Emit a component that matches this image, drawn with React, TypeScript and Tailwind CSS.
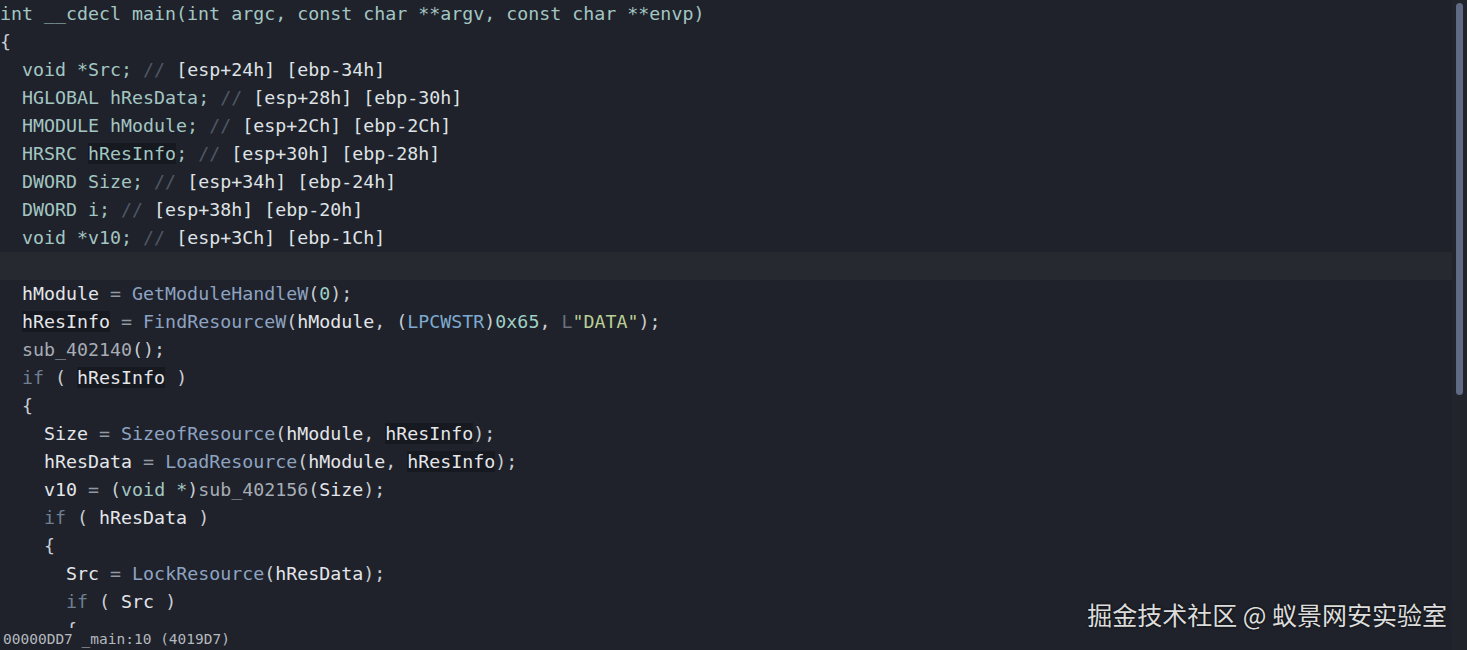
import React from 'react';

type Tok = [string, string];

const T = 'text-[#a3c6c3]'; // types / declarations
const W = 'text-[#e4e6ea]'; // locals, plain
const P = 'text-[#c9cdd3]'; // punctuation
const OP = 'text-[#9199a4]'; // operators
const FN = 'text-[#8ea3c2]'; // api calls
const NUM = 'text-[#9fd0c6]';
const KW = 'text-[#6f7f92]'; // if
const CM = 'text-[#4f5866]'; // comment marker
const CT = 'text-[#dfe2e6]'; // comment text
const SUB = 'text-[#a7adb6]';
const STR = 'text-[#b9cf95]';
const HL = 'bg-[#161920]'; // highlighted identifier

const id = (s: string, c = W): Tok => [s, c];
const hr = (c = W): Tok => ['hResInfo', c + ' ' + HL];

const decl = (ind: number, head: Tok[], tail: string, cmt: string): Tok[] => [
  [' '.repeat(ind), P],
  ...head,
  [tail, T],
  [' // ', CM],
  [cmt, CT],
];

const lines: Tok[][] = [
  [['int __cdecl main(int argc, const char **argv, const char **envp)', T]],
  [['{', P]],
  decl(2, [['void *Src', T]], ';', '[esp+24h] [ebp-34h]'),
  decl(2, [['HGLOBAL hResData', T]], ';', '[esp+28h] [ebp-30h]'),
  decl(2, [['HMODULE hModule', T]], ';', '[esp+2Ch] [ebp-2Ch]'),
  decl(2, [['HRSRC ', T], hr(T)], ';', '[esp+30h] [ebp-28h]'),
  decl(2, [['DWORD Size', T]], ';', '[esp+34h] [ebp-24h]'),
  decl(2, [['DWORD i', T]], ';', '[esp+38h] [ebp-20h]'),
  decl(2, [['void *v10', T]], ';', '[esp+3Ch] [ebp-1Ch]'),
  [],
  [['  ', P], id('hModule'), [' = ', OP], ['GetModuleHandleW', FN], ['(', P], ['0', NUM], [');', P]],
  [
    ['  ', P], hr(), [' = ', OP], ['FindResourceW', FN], ['(', P], id('hModule'), [', (', P],
    ['LPCWSTR', 'text-[#7eaad0]'], [')', P], ['0x65', NUM], [', ', P], ['L', 'text-[#69717d]'],
    ['"DATA"', STR], [');', P],
  ],
  [['  ', P], ['sub_402140', SUB], ['();', P]],
  [['  ', P], ['if', KW], [' ( ', P], hr(), [' )', P]],
  [['  {', P]],
  [['    ', P], id('Size'), [' = ', OP], ['SizeofResource', FN], ['(', P], id('hModule'), [', ', P], hr(), [');', P]],
  [['    ', P], id('hResData'), [' = ', OP], ['LoadResource', FN], ['(', P], id('hModule'), [', ', P], hr(), [');', P]],
  [['    ', P], id('v10'), [' = ', OP], ['(', P], ['void *', T], [')', P], ['sub_402156', SUB], ['(', P], id('Size'), [');', P]],
  [['    ', P], ['if', KW], [' ( ', P], id('hResData'), [' )', P]],
  [['    {', P]],
  [['      ', P], id('Src'), [' = ', OP], ['LockResource', FN], ['(', P], id('hResData'), [');', P]],
  [['      ', P], ['if', KW], [' ( ', P], id('Src'), [' )', P]],
  [['      {', P]],
];

export default function App() {
  return (
    <div className="relative flex h-[650px] w-full overflow-hidden bg-[#1f222a]">
      <div className="flex min-w-0 flex-1 flex-col">
        {/* pseudocode */}
        <div className="flex-1 overflow-hidden font-['DejaVu_Sans_Mono',monospace] text-[18.3px] leading-[28px]">
          {lines.map((ln, i) => (
            <div key={i} className={'h-[28px] whitespace-pre ' + (i === 9 ? 'bg-[#262930]' : '')}>
              {ln.map((t, j) => (
                <span key={j} className={t[1]}>
                  {t[0]}
                </span>
              ))}
            </div>
          ))}
        </div>
        {/* status line */}
        <div className="h-[22px] shrink-0 whitespace-pre pl-[3px] font-['DejaVu_Sans_Mono',monospace] text-[14.5px] leading-[22px] text-[#b4b8bf]">
          00000DD7 _main:10 (4019D7)
        </div>
      </div>

      {/* scrollbar */}
      <div className="w-[15px] shrink-0 bg-[#21242b] pt-[3px] pl-[4px]">
        <div className="h-[392px] w-[7px] rounded-sm bg-[#616a85]" />
      </div>

      {/* watermark */}
      <div className="absolute right-[20px] bottom-[21px] font-['Noto_Sans_CJK_SC','Noto_Sans',sans-serif] text-[25px] leading-[30px] text-[#dcdcdc] [text-shadow:0_0_3px_rgba(0,0,0,0.8)]">
        掘金技术社区 @ 蚁景网安实验室
      </div>
    </div>
  );
}
